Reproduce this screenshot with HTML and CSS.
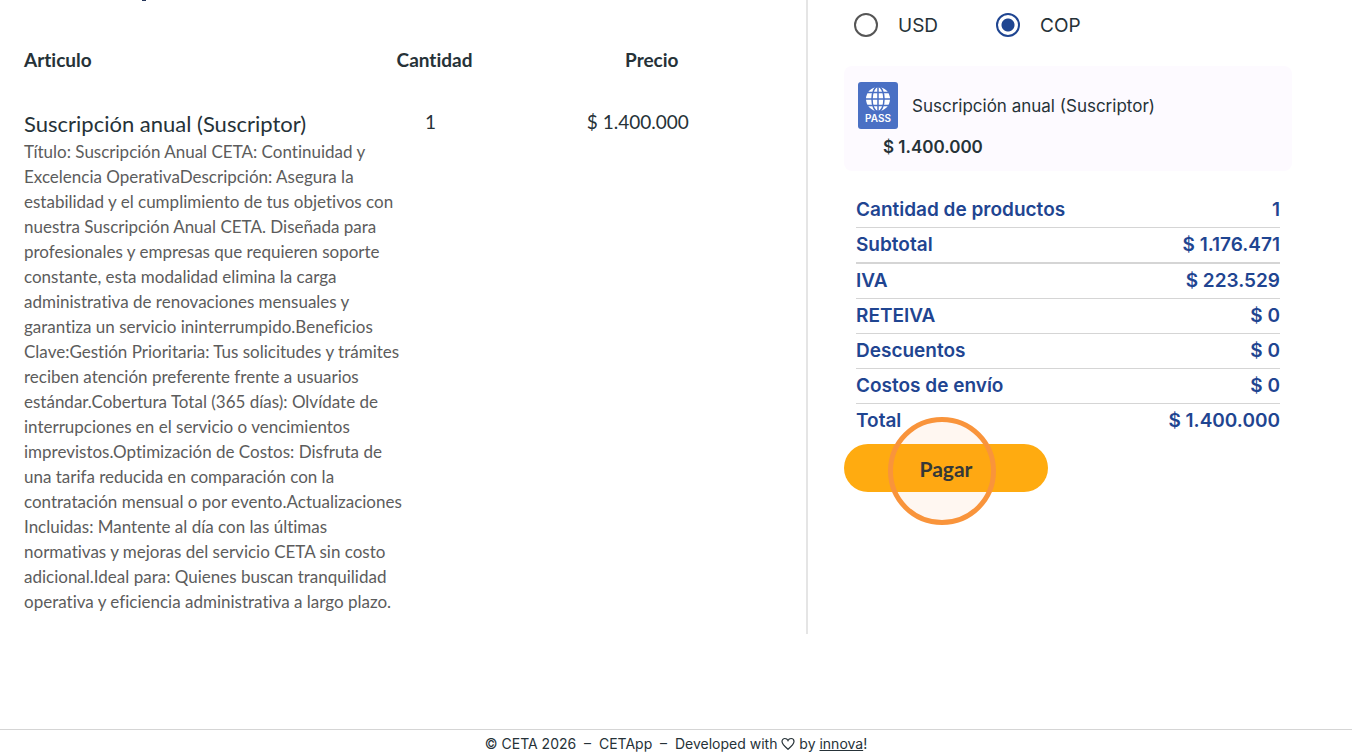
FILE: index.html
```html
<!DOCTYPE html>
<html lang="es">
<head>
    <meta charset="UTF-8">
    <meta name="viewport" content="width=device-width, initial-scale=1.0">
    <title>CETApp</title>
    <link rel="stylesheet" href="styles.css">
</head>
<body>
    <main class="checkout">
        <section class="detail">
            <div class="title-tail"></div>
            <table class="items">
                <thead>
                    <tr>
                        <th class="col-item">Articulo</th>
                        <th class="col-qty">Cantidad</th>
                        <th class="col-price">Precio</th>
                    </tr>
                </thead>
                <tbody>
                    <tr>
                        <td>
                            <div class="item-name">Suscripción anual (Suscriptor)</div>
                            <p class="item-text">
                                Título: Suscripción Anual CETA: Continuidad y<br>
                                Excelencia OperativaDescripción: Asegura la<br>
                                estabilidad y el cumplimiento de tus objetivos con<br>
                                nuestra Suscripción Anual CETA. Diseñada para<br>
                                profesionales y empresas que requieren soporte<br>
                                constante, esta modalidad elimina la carga<br>
                                administrativa de renovaciones mensuales y<br>
                                garantiza un servicio ininterrumpido.Beneficios<br>
                                Clave:Gestión Prioritaria: Tus solicitudes y trámites<br>
                                reciben atención preferente frente a usuarios<br>
                                estándar.Cobertura Total (365 días): Olvídate de<br>
                                interrupciones en el servicio o vencimientos<br>
                                imprevistos.Optimización de Costos: Disfruta de<br>
                                una tarifa reducida en comparación con la<br>
                                contratación mensual o por evento.Actualizaciones<br>
                                Incluidas: Mantente al día con las últimas<br>
                                normativas y mejoras del servicio CETA sin costo<br>
                                adicional.Ideal para: Quienes buscan tranquilidad<br>
                                operativa y eficiencia administrativa a largo plazo.
                            </p>
                        </td>
                        <td class="num">1</td>
                        <td class="num">$ 1.400.000</td>
                    </tr>
                </tbody>
            </table>
        </section>

        <section class="summary">
            <div class="currency">
                <label class="option"><input type="radio" name="currency" value="usd">USD</label>
                <label class="option"><input type="radio" name="currency" value="cop" checked>COP</label>
            </div>

            <div class="product">
                <div class="product-row">
                    <svg class="pass" width="40" height="47" viewBox="0 0 40 47">
                        <rect width="40" height="47" rx="3" fill="#4a70c4"/>
                        <circle cx="20" cy="17" r="12" fill="#fff"/>
                        <g fill="none" stroke="#4a70c4" stroke-width="1.5">
                            <path d="M20 4v26M7 17h26M9 10.500h22M9 23.500h22"/>
                            <ellipse cx="20" cy="17" rx="6" ry="12.500"/>
                        </g>
                        <text x="20" y="40" text-anchor="middle" class="pass-text">PASS</text>
                    </svg>
                    <span>Suscripción anual (Suscriptor)</span>
                </div>
                <div class="product-price">$ 1.400.000</div>
            </div>

            <table class="totals">
                <tr><th>Cantidad de productos</th><td>1</td></tr>
                <tr><th>Subtotal</th><td>$ 1.176.471</td></tr>
                <tr class="taxes"><th>IVA</th><td>$ 223.529</td></tr>
                <tr><th>RETEIVA</th><td>$ 0</td></tr>
                <tr><th>Descuentos</th><td>$ 0</td></tr>
                <tr><th>Costos de envío</th><td>$ 0</td></tr>
                <tr><th>Total</th><td>$ 1.400.000</td></tr>
            </table>

            <div class="pay">
                <button class="pay-btn" type="button">Pagar</button>
                <div class="click-mark"></div>
            </div>
        </section>
    </main>

    <footer class="footer">
        © CETA 2026 &nbsp;–&nbsp; CETApp &nbsp;–&nbsp; Developed with
        <svg class="heart" width="14" height="14" viewBox="0 0 14 14">
            <path d="M7 12.300C4 9.700 1 7.200 1 4.500 1 2.700 2.300 1.500 3.900 1.500 5.200 1.500 6.400 2.300 7 3.600 7.600 2.300 8.800 1.500 10.100 1.500 11.700 1.500 13 2.700 13 4.500 13 7.200 10 9.700 7 12.300z" fill="none" stroke="#263238" stroke-width="1.200"/>
        </svg>
        by <a href="#">innova</a>!
    </footer>
</body>
</html>
```

FILE: styles.css
```css
* {
    box-sizing: border-box;
}
body {
    margin: 0;
    min-height: 100vh;
    display: flex;
    flex-direction: column;
    background-color: #fff;
    color: #263238;
    font-family: Inter, sans-serif;
    overflow: hidden;
}
.checkout {
    display: grid;
    grid-template-columns: 1fr 544px;
}
.detail {
    padding: 0 0 20px 24px;
    border-right: 2px solid #e5e5e5;
    font-family: Lato, sans-serif;
    font-variant-ligatures: none;
}
/* bottom edge of the title above, scrolled out of view */
.title-tail {
    width: 4px;
    height: 1px;
    margin-left: 118px;
    background-color: #26365a;
}
.items {
    width: 100%;
    table-layout: fixed;
    border-collapse: collapse;
}
.items th {
    height: 107px;
    padding: 47px 0 0;
    font-size: 19px;
    line-height: 24px;
    font-weight: 700;
    white-space: nowrap;
    vertical-align: top;
}
.items .col-item {
    width: 47%;
    text-align: left;
}
.items .col-qty {
    width: 11%;
}
.items .col-price {
    padding-left: 20px;
}
.items td {
    padding: 0;
    vertical-align: top;
    white-space: nowrap;
}
.items .num {
    padding-right: 8px;
    text-align: center;
    font-size: 19px;
    line-height: 28px;
}
.item-name {
    font-size: 22px;
    line-height: 31px;
}
.item-text {
    margin: 0;
    font-size: 17px;
    line-height: 25px;
    color: #5c5c5c;
}
.summary {
    padding: 8px 60px 0 36px;
}
.currency {
    display: flex;
    gap: 56px;
    padding-left: 8px;
}
.option {
    display: flex;
    align-items: center;
    gap: 20px;
    height: 34px;
    font-size: 19px;
}
.option input {
    appearance: none;
    width: 24px;
    height: 24px;
    margin: 0 0 0 2px;
    border: 2px solid #555;
    border-radius: 50%;
}
.option input:checked {
    border-color: #1f4591;
    background: radial-gradient(circle, #1f4591 6px, #fff 7px);
}
.product {
    margin-top: 24px;
    height: 105px;
    padding: 16px 14px;
    border-radius: 8px;
    background-color: #fdfaff;
}
.product-row {
    display: flex;
    align-items: center;
    gap: 14px;
    font-size: 17px;
    line-height: 20px;
}
.pass-text {
    font-family: Inter, sans-serif;
    font-size: 10px;
    font-weight: 600;
    fill: #fff;
}
.product-price {
    margin-top: 6px;
    padding-left: 25px;
    font-size: 17px;
    line-height: 24px;
    font-weight: 600;
}
.totals {
    width: calc(100% - 24px);
    margin: 22px 12px 0;
    border-collapse: collapse;
    color: #1f4591;
    font-size: 19px;
    line-height: 34px;
}
.totals th,
.totals td {
    height: 34px;
    padding: 0;
    font-weight: 600;
    text-align: left;
}
.totals td {
    text-align: right;
}
.totals tr + tr {
    border-top: 1px solid #d5d5d5;
}
.totals tr.taxes {
    border-top-width: 2px;
}
.pay {
    position: relative;
    width: 204px;
    margin-top: 6px;
}
.pay-btn {
    display: block;
    width: 100%;
    height: 48px;
    padding: 0;
    border: none;
    border-radius: 24px;
    background-color: #ffab10;
    color: #263238;
    font: 700 21px Lato, sans-serif;
    cursor: pointer;
}
.click-mark {
    position: absolute;
    top: -27px;
    left: 44px;
    width: 108px;
    height: 108px;
    border: 5px solid #f9943b;
    border-radius: 50%;
    background-color: rgba(249, 148, 59, 0.07);
    pointer-events: none;
}
.footer {
    margin-top: auto;
    height: 27px;
    border-top: 1px solid #d5d5d5;
    font-size: 14px;
    line-height: 28px;
    text-align: center;
}
.footer a {
    color: inherit;
}
.heart {
    vertical-align: -2px;
}
```
